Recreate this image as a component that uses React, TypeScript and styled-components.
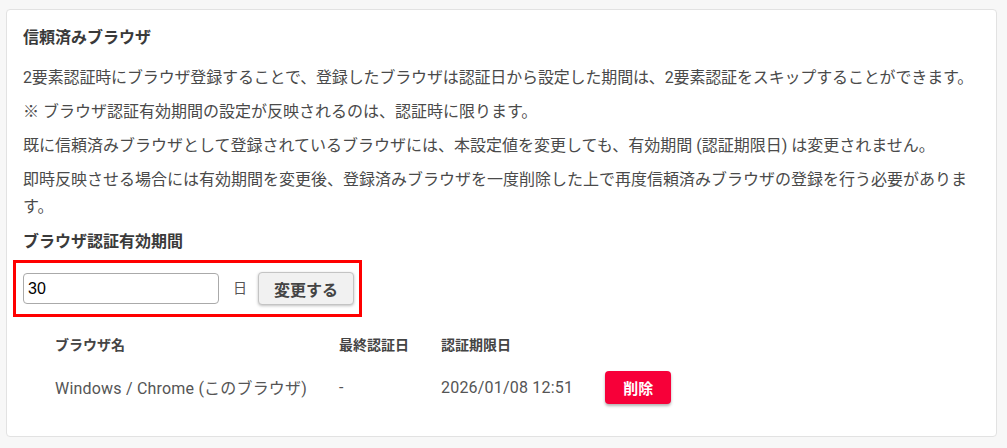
import React from 'react'
import { createGlobalStyle, styled } from 'styled-components'

const GlobalStyle = createGlobalStyle`
  html, body {
    margin: 0;
    padding: 0;
    background: #f7f7f7;
    font-family: Roboto, "Noto Sans CJK JP", sans-serif;
  }
`

const Page = styled.div`
  padding: 9px 10px 11px 6px;
`

const Card = styled.section`
  background: #fff;
  border: 1px solid #e2e2e2;
  border-radius: 4px;
  padding: 16px 16px 23px;
`

const Title = styled.h2`
  margin: 0 0 14px;
  font-size: 16px;
  line-height: 24px;
  font-weight: 700;
  color: #3a3a3a;
`

const Text = styled.p<{ $tight?: boolean }>`
  margin: 0 0 7px;
  font-size: 16px;
  line-height: 27px;
  color: #4a4a4a;
  letter-spacing: ${(p) => (p.$tight ? '-0.15px' : 'normal')};
`

const SubTitle = styled.h3`
  margin: 10px 0 0;
  font-size: 16px;
  line-height: 24px;
  font-weight: 700;
  color: #3a3a3a;
`

const Highlight = styled.div`
  display: inline-flex;
  align-items: center;
  margin: 6px 0 0 -10px;
  padding: 9px 5px 9px 7px;
  border: 3px solid #ff0000;
`

const NumberInput = styled.input`
  box-sizing: border-box;
  width: 196px;
  height: 31px;
  padding: 0 4px;
  border: 1px solid #aaa;
  border-radius: 4px;
  font-family: "Liberation Sans", Arial, sans-serif;
  font-size: 16px;
  color: #000;
  outline: none;
`

const Unit = styled.span`
  margin: -3px 11px 0 14px;
  font-size: 14px;
  color: #555;
`

const Button = styled.button`
  box-sizing: border-box;
  width: 96px;
  height: 33px;
  border: 1px solid #c4c4c4;
  border-radius: 4px;
  background: #f1f1f1;
  box-shadow: 0 1px 3px rgba(0, 0, 0, 0.25);
  font-family: Roboto, "Noto Sans CJK JP", sans-serif;
  font-size: 16px;
  font-weight: 700;
  color: #444;
  cursor: pointer;
`

const Table = styled.table`
  margin: 10px 0 0 16px;
  border-collapse: collapse;
`

const Th = styled.th`
  height: 34px;
  padding: 0 16px;
  text-align: left;
  font-size: 14px;
  font-weight: 700;
  color: #444;
  white-space: nowrap;
`

const Td = styled.td`
  height: 52px;
  padding: 0 16px;
  font-size: 16px;
  letter-spacing: 0.2px;
  color: #555;
  white-space: nowrap;
`

const DeleteButton = styled.button`
  width: 66px;
  height: 33px;
  border: none;
  border-radius: 4px;
  background: #f70039;
  box-shadow: 0 2px 3px rgba(0, 0, 0, 0.3);
  font-family: Roboto, "Noto Sans CJK JP", sans-serif;
  font-size: 15px;
  font-weight: 700;
  color: #fff;
  cursor: pointer;
`

const browsers = [
  { name: 'Windows / Chrome (このブラウザ)', last: '-', expires: '2026/01/08 12:51' },
]

export default function App() {
  return (
    <Page>
      <GlobalStyle />
      <Card>
        <Title>信頼済みブラウザ</Title>
        <Text $tight>
          2要素認証時にブラウザ登録することで、登録したブラウザは認証日から設定した期間は、2要素認証をスキップすることができます。
        </Text>
        <Text>※ ブラウザ認証有効期間の設定が反映されるのは、認証時に限ります。</Text>
        <Text>
          既に信頼済みブラウザとして登録されているブラウザには、本設定値を変更しても、有効期間 (認証期限日) は変更されません。
        </Text>
        <Text>
          即時反映させる場合には有効期間を変更後、登録済みブラウザを一度削除した上で再度信頼済みブラウザの登録を行う必要があります。
        </Text>
        <SubTitle>ブラウザ認証有効期間</SubTitle>
        <Highlight>
          <NumberInput type="text" defaultValue="30" />
          <Unit>日</Unit>
          <Button>変更する</Button>
        </Highlight>
        <Table>
          <thead>
            <tr>
              <Th>ブラウザ名</Th>
              <Th>最終認証日</Th>
              <Th>認証期限日</Th>
              <Th />
            </tr>
          </thead>
          <tbody>
            {browsers.map((b) => (
              <tr key={b.name}>
                <Td>{b.name}</Td>
                <Td>{b.last}</Td>
                <Td>{b.expires}</Td>
                <Td>
                  <DeleteButton>削除</DeleteButton>
                </Td>
              </tr>
            ))}
          </tbody>
        </Table>
      </Card>
    </Page>
  )
}
